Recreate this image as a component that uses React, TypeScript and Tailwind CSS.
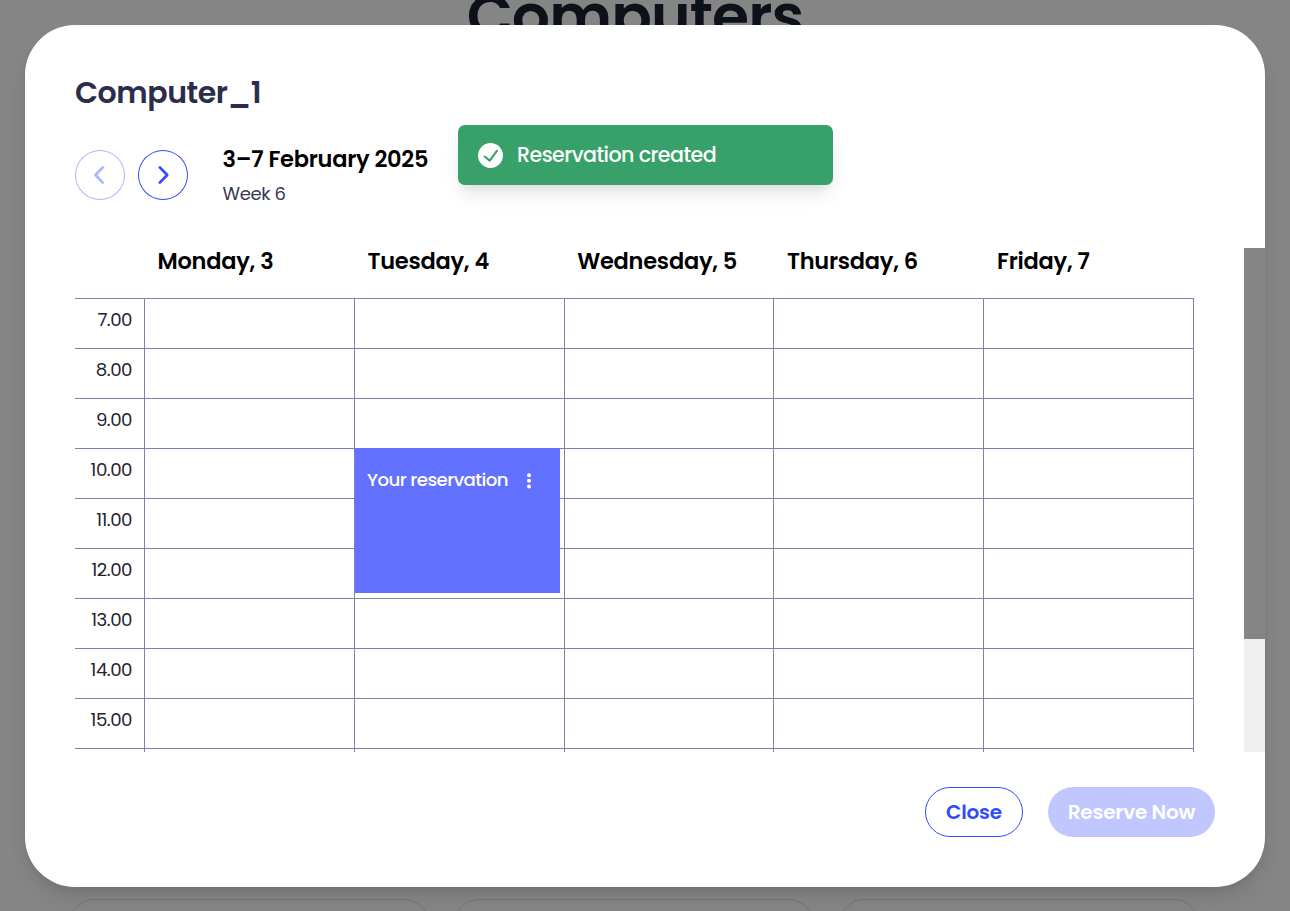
import React from "react";

const days = [
  { label: "Monday, 3", col: "w-[210px]", pad: "pl-[13.5px]" },
  { label: "Tuesday, 4", col: "w-[210px]", pad: "pl-[13.5px]" },
  { label: "Wednesday, 5", col: "w-[209px]", pad: "pl-[13.2px]" },
  { label: "Thursday, 6", col: "w-[210px]", pad: "pl-[14px]" },
  { label: "Friday, 7", col: "w-[211px]", pad: "pl-[14px]" },
];

const hours = ["7.00", "8.00", "9.00", "10.00", "11.00", "12.00", "13.00", "14.00", "15.00", "16.00"];

function Chevron({ direction }: { direction: "left" | "right" }) {
  return (
    <svg width="50" height="50" viewBox="0 0 50 50" fill="none" stroke="currentColor" strokeWidth="2.7" strokeLinecap="round" strokeLinejoin="round">
      <path d={direction === "left" ? "M27.8 17.4 L20.4 25 L27.8 32.6" : "M21.8 17.4 L29.2 25 L21.8 32.6"} />
    </svg>
  );
}

function Toast() {
  return (
    <div className="absolute left-[458px] top-[125px] flex h-[60px] w-[375px] items-center gap-3.5 rounded-[7px] bg-[#38a169] px-5 text-white shadow-[0_12.5px_18.75px_-3.75px_rgba(0,0,0,0.1),0_5px_7.5px_-2.5px_rgba(0,0,0,0.05)]">
      <svg width="25" height="25" viewBox="0 0 24 24" fill="currentColor">
        <path d="M12,0A12,12,0,1,0,24,12,12.014,12.014,0,0,0,12,0Zm6.927,8.2-6.845,9.289a1.011,1.011,0,0,1-1.43.188L5.764,13.769a1,1,0,1,1,1.25-1.562l4.076,3.261,6.227-8.451A1,1,0,1,1,18.927,8.2Z" />
      </svg>
      <span className="text-[20.6px] leading-[30px] font-medium tracking-[-0.54px] whitespace-nowrap">Reservation created</span>
    </div>
  );
}

function Schedule() {
  return (
    <div className="flex h-[504px] justify-between overflow-hidden pl-[50px]">
      <div className="w-[1119px] shrink-0">
        <div className="flex h-[50px] pl-[69px]">
          {days.map((d) => (
            <div key={d.label} className={`${d.col} ${d.pad} text-[22.5px] leading-[27px] font-semibold tracking-[-0.25px] text-black whitespace-nowrap`}>
              {d.label}
            </div>
          ))}
        </div>
        <div className="relative">
          {hours.map((h) => (
            <div key={h} className="flex h-[50px]">
              <div className="w-[69px] border-t border-[#8082a8] pr-[12px] pt-[10px] text-right text-[18.2px] leading-[22px] tracking-[-0.5px] text-[#1f2430]">
                {h}
              </div>
              {days.map((d) => (
                <div key={d.label} className={`${d.col} border-l border-t border-[#8082a8] last:border-r`} />
              ))}
            </div>
          ))}
          <div className="absolute left-[280px] top-[150px] flex h-[145px] w-[205px] justify-between bg-[#6271ff] pl-3 pr-[25px] pt-[21px] text-white">
            <span className="text-[18.2px] leading-[22px] font-medium tracking-[-0.56px] whitespace-nowrap">Your reservation</span>
            <svg className="mt-1" width="12" height="16" viewBox="0 0 12 16" fill="currentColor">
              <circle cx="6" cy="2.2" r="2" />
              <circle cx="6" cy="7.8" r="2" />
              <circle cx="6" cy="13.4" r="2" />
            </svg>
          </div>
        </div>
      </div>
      <div className="w-[21px] bg-[#efefef]">
        <div className="h-[391px] bg-[#858585]" />
      </div>
    </div>
  );
}

export default function App() {
  return (
    <div className="relative h-[911px] w-[1290px] overflow-hidden bg-[#858585] font-[Poppins,Inter,sans-serif]">
      <div className="flex h-full flex-col">
        <h1 className="-mt-[21px] h-[80px] shrink-0 pr-5 text-center text-[60px] leading-[75px] font-semibold tracking-[-0.9px] text-[#0d1119]">Computers</h1>
        <div className="mt-[840px] flex shrink-0 gap-[25px] pl-[69px]">
          {[0, 1, 2].map((i) => (
            <div key={i} className="h-[100px] w-[360px] rounded-[25px] border border-[#737084]" />
          ))}
        </div>
      </div>

      <div className="absolute left-[25px] top-[25px] flex h-[862px] w-[1240px] flex-col rounded-[50px] bg-white shadow-[0_12.5px_18.75px_-3.75px_rgba(0,0,0,0.1),0_5px_7.5px_-2.5px_rgba(0,0,0,0.05)]">
        <div className="flex h-[223px] flex-col px-[50px] pt-[50px]">
          <h2 className="h-[75px] text-[30px] leading-[36px] font-semibold tracking-[-0.45px] text-[#2b2d4b]">Computer_1</h2>
          <div className="flex">
            <div className="flex gap-[13px]">
              <button className="size-[50px] rounded-full text-[#acb5ff] shadow-[inset_0_0_0_1px_currentColor]"><Chevron direction="left" /></button>
              <button className="size-[50px] rounded-full text-[#304cfb] shadow-[inset_0_0_0_1px_currentColor]"><Chevron direction="right" /></button>
            </div>
            <div className="-mt-[5px] pl-[34.5px]">
              <div className="h-[38px] text-[22.5px] leading-[28px] font-semibold tracking-[-0.26px] text-black whitespace-nowrap">3–7 February 2025</div>
              <div className="text-[18px] leading-[22px] tracking-[-0.38px] text-[#353754]">Week 6</div>
            </div>
          </div>
        </div>
        <Schedule />
        <div className="flex justify-end gap-[25px] pr-[50px] pt-[35px] text-[20px] font-semibold tracking-[-0.22px]">
          <button className="h-[50px] w-[98px] rounded-full border border-[#304cfb] text-[#304cfb]">Close</button>
          <button className="h-[50px] w-[167px] rounded-full bg-[#c0c7ff] text-white whitespace-nowrap">Reserve Now</button>
        </div>
      </div>
      <Toast />
    </div>
  );
}
